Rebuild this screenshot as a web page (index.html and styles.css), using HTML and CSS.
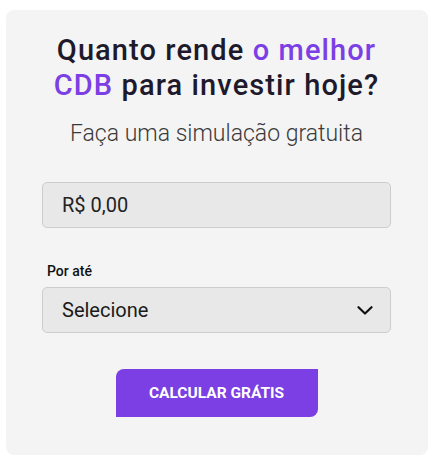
FILE: index.html
```html
<!DOCTYPE html>
<html lang="pt-BR">
<head>
    <meta charset="UTF-8">
    <meta name="viewport" content="width=device-width, initial-scale=1.0">
    <title>Simulador CDB</title>
    <link rel="stylesheet" href="styles.css">
</head>
<body>

    <div class="sim-card">
        <h1 class="sim-title">Quanto rende <span class="destaque">o melhor CDB</span> para investir hoje?</h1>
        <p class="sim-sub">Faça uma simulação gratuita</p>

        <form class="sim-form">
            <input type="text" class="sim-input" value="R$ 0,00">

            <label class="sim-label" for="prazo">Por até</label>
            <div class="sim-select" id="prazo">
                <span>Selecione</span>
                <svg width="16" height="9" viewBox="0 0 16 9">
                    <path d="M1.5 1.2 L8 7.5 L14.5 1.2" fill="none" stroke="#111" stroke-width="2.2" stroke-linecap="round" stroke-linejoin="round"/>
                </svg>
            </div>

            <button type="button" class="sim-btn">CALCULAR GRÁTIS</button>
        </form>
    </div>

</body>
</html>
```

FILE: styles.css
```css
body {
    margin: 0;
    padding: 10px 5px 9px 6px;
    background-color: #ffffff;
    font-family: Roboto, "Liberation Sans", sans-serif;
}
.sim-card {
    background-color: #f4f4f4;
    border-radius: 8px;
    padding: 23px 37px 38px 36px;
    height: 384px;
}
.sim-title {
    margin: 0 auto;
    width: 345px;
    text-align: center;
    font-size: 29px;
    line-height: 35px;
    font-weight: 500;
    letter-spacing: 1.1px;
    color: #1e1a2c;
}
.destaque { color: #7b3fe4; }
.sim-sub {
    margin: 17px 0 0;
    text-align: center;
    font-size: 23px;
    line-height: 28px;
    font-weight: 300;
    color: #3a3a3a;
}
.sim-form {
    display: flex;
    flex-direction: column;
    margin-top: 34px;
}
.sim-input, .sim-select {
    box-sizing: border-box;
    width: 349px;
    height: 46px;
    border: 1px solid #cdcdcd;
    border-radius: 5px;
    background-color: #e8e8e8;
    padding: 0 17px 0 19px;
    font-family: inherit;
    font-size: 20px;
    color: #222;
}
.sim-select {
    display: flex;
    align-items: center;
    justify-content: space-between;
    color: #1a1a1a;
}
.sim-label {
    margin: 33px 0 6px 5px;
    font-size: 14px;
    line-height: 20px;
    font-weight: 500;
    color: #111;
}
.sim-btn {
    align-self: center;
    margin-top: 36px;
    width: 202px;
    height: 48px;
    border: none;
    border-radius: 8px 0 8px 0;
    background-color: #7b3fe4;
    color: #fff;
    font-family: inherit;
    font-size: 15.5px;
    font-weight: 700;
}
```
